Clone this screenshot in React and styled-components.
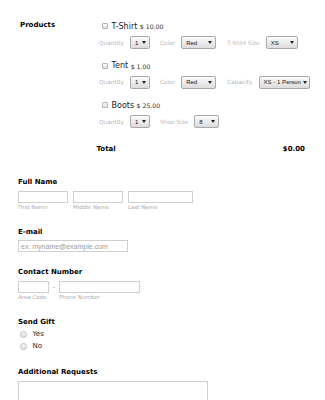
import React from "react";
import styled, { createGlobalStyle } from "styled-components";

const GlobalStyle = createGlobalStyle`
  html, body {
    margin: 0;
    padding: 0;
    background: #fff;
  }
  body {
    font-family: "DejaVu Sans", Verdana, sans-serif;
    color: #000;
  }
`;

const Page = styled.div`
  width: 325px;
  height: 400px;
  overflow: hidden;
  padding-top: 20px;
  box-sizing: border-box;
`;

const ProductsSection = styled.div`
  display: flex;
  padding-left: 20px;
`;

const SectionLabel = styled.div`
  width: 79px;
  flex-shrink: 0;
  font-size: 7px;
  font-weight: bold;
  line-height: 10px;
`;

const ProductList = styled.div`
  display: flex;
  flex-direction: column;
  gap: 10.5px;
`;

const NameLine = styled.div`
  display: flex;
  align-items: center;
  height: 12px;
`;

const Checkbox = styled.span`
  width: 4px;
  height: 4px;
  border: 1px solid #b4b4b4;
  border-radius: 1px;
  background: linear-gradient(#fdfdfd, #e2e2e2);
  margin: 0 4px 0 2.5px;
`;

const ProductName = styled.span`
  font-size: 8px;
  color: #222;
`;

const Price = styled.span`
  font-size: 6.2px;
  color: #333;
  margin-left: 2.5px;
  padding-top: 1px;
`;

const OptionRow = styled.div`
  display: flex;
  align-items: center;
  height: 13px;
  margin-top: 4px;
`;

const OptionLabel = styled.span`
  font-size: 5.8px;
  color: #b8b8b8;
  margin-right: 6px;
  white-space: nowrap;
`;

const SelectBox = styled.span`
  display: flex;
  align-items: center;
  justify-content: space-between;
  box-sizing: border-box;
  width: ${(p) => p.$w}px;
  height: 13px;
  margin-right: ${(p) => p.$mr || 0}px;
  padding: 0 3px 0 4px;
  border: 1px solid #a8a8a8;
  border-radius: 2px;
  background: linear-gradient(#fbfbfb, #dcdcdc);
  font-family: "Liberation Sans", Arial, sans-serif;
  font-size: 6px;
  color: #111;
  white-space: nowrap;
`;

const Arrow = styled.span`
  width: 0;
  height: 0;
  border-left: 2px solid transparent;
  border-right: 2px solid transparent;
  border-top: 3px solid #222;
  margin-left: 2px;
`;

const TotalRow = styled.div`
  display: flex;
  justify-content: space-between;
  margin-top: 15.5px;
  padding: 0 20px 0 96.5px;
  font-size: 7px;
  font-weight: bold;
  line-height: 10px;
`;

const Form = styled.div`
  display: flex;
  flex-direction: column;
  gap: 15px;
  margin-top: 23.5px;
  padding-left: 18px;
`;

const Field = styled.div`
  display: flex;
  flex-direction: column;
`;

const FieldLabel = styled.div`
  font-size: 7px;
  font-weight: bold;
  line-height: 10px;
  margin-bottom: 3.5px;
`;

const InputRow = styled.div`
  display: flex;
  align-items: flex-start;
  gap: ${(p) => (p.$gap !== undefined ? p.$gap : 5)}px;
`;

const InputCol = styled.div`
  display: flex;
  flex-direction: column;
`;

const TextInput = styled.div`
  box-sizing: border-box;
  width: ${(p) => p.$w}px;
  height: 12px;
  border: 1px solid #cfcfcf;
  display: flex;
  align-items: center;
  padding-left: 2px;
  font-family: "Liberation Sans", Arial, sans-serif;
  font-size: 7px;
  color: #9a9a9a;
  white-space: nowrap;
`;

const SubLabel = styled.div`
  font-size: 5.5px;
  color: #ababab;
  line-height: 9px;
`;

const Dash = styled.div`
  width: 10px;
  height: 12px;
  line-height: 12px;
  text-align: center;
  font-size: 6px;
  color: #777;
`;

const RadioList = styled.div`
  display: flex;
  flex-direction: column;
  margin-top: -2px;
`;

const RadioLine = styled.div`
  display: flex;
  align-items: center;
  height: 12px;
`;

const Radio = styled.span`
  box-sizing: border-box;
  width: 7px;
  height: 7px;
  border-radius: 50%;
  border: 1px solid #bdbdbd;
  background: linear-gradient(#f8f8f8, #dedede);
  margin: 0 6px 0 1.5px;
`;

const RadioText = styled.span`
  font-size: 7px;
  color: #222;
`;

const TextArea = styled.div`
  box-sizing: border-box;
  width: 190px;
  height: 60px;
  border: 1px solid #cfcfcf;
`;

const products = [
  {
    name: "T-Shirt",
    price: "$ 10.00",
    options: [
      { label: "Quantity", value: "1", w: 20, mr: 10 },
      { label: "Color", value: "Red", w: 35, mr: 11 },
      { label: "T-Shirt Size", value: "XS", w: 32 },
    ],
  },
  {
    name: "Tent",
    price: "$ 1.00",
    options: [
      { label: "Quantity", value: "1", w: 20, mr: 10 },
      { label: "Color", value: "Red", w: 35, mr: 11 },
      { label: "Capacity", value: "XS - 1 Person", w: 51 },
    ],
  },
  {
    name: "Boots",
    price: "$ 25.00",
    options: [
      { label: "Quantity", value: "1", w: 20, mr: 10 },
      { label: "Shoe Size", value: "8", w: 25 },
    ],
  },
];

const App = () => {
  return (
    <Page>
      <GlobalStyle />
      <ProductsSection>
        <SectionLabel>Products</SectionLabel>
        <ProductList>
          {products.map((product) => (
            <div key={product.name}>
              <NameLine>
                <Checkbox />
                <ProductName>{product.name}</ProductName>
                <Price>{product.price}</Price>
              </NameLine>
              <OptionRow>
                {product.options.map((opt) => (
                  <React.Fragment key={opt.label}>
                    <OptionLabel>{opt.label}</OptionLabel>
                    <SelectBox $w={opt.w} $mr={opt.mr}>
                      {opt.value}
                      <Arrow />
                    </SelectBox>
                  </React.Fragment>
                ))}
              </OptionRow>
            </div>
          ))}
        </ProductList>
      </ProductsSection>

      <TotalRow>
        <span>Total</span>
        <span>$0.00</span>
      </TotalRow>

      <Form>
        <Field>
          <FieldLabel>Full Name</FieldLabel>
          <InputRow>
            <InputCol>
              <TextInput $w={50} />
              <SubLabel>First Name</SubLabel>
            </InputCol>
            <InputCol>
              <TextInput $w={50} />
              <SubLabel>Middle Name</SubLabel>
            </InputCol>
            <InputCol>
              <TextInput $w={65} />
              <SubLabel>Last Name</SubLabel>
            </InputCol>
          </InputRow>
        </Field>

        <Field>
          <FieldLabel>E-mail</FieldLabel>
          <TextInput $w={110}>ex: myname@example.com</TextInput>
        </Field>

        <Field>
          <FieldLabel>Contact Number</FieldLabel>
          <InputRow $gap={0}>
            <InputCol>
              <TextInput $w={31} />
              <SubLabel>Area Code</SubLabel>
            </InputCol>
            <Dash>-</Dash>
            <InputCol>
              <TextInput $w={81} />
              <SubLabel>Phone Number</SubLabel>
            </InputCol>
          </InputRow>
        </Field>

        <Field>
          <FieldLabel>Send Gift</FieldLabel>
          <RadioList>
            <RadioLine>
              <Radio />
              <RadioText>Yes</RadioText>
            </RadioLine>
            <RadioLine>
              <Radio />
              <RadioText>No</RadioText>
            </RadioLine>
          </RadioList>
        </Field>

        <Field>
          <FieldLabel>Additional Requests</FieldLabel>
          <TextArea />
        </Field>
      </Form>
    </Page>
  );
};

export default App;
